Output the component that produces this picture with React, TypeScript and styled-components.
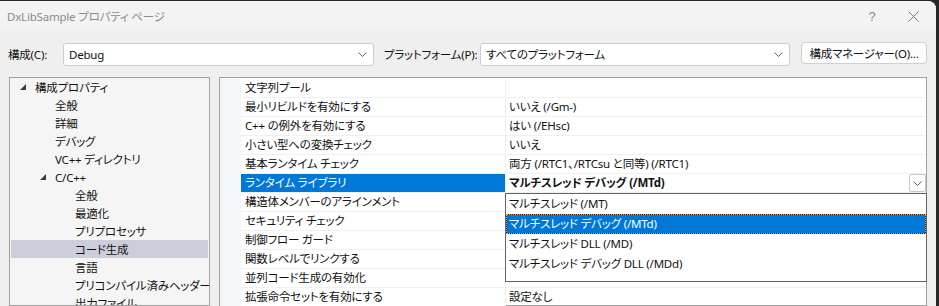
import React from 'react';
import styled, { createGlobalStyle } from 'styled-components';

const GlobalStyle = createGlobalStyle`
  html, body {
    margin: 0;
    padding: 0;
    background: #262626;
  }
  body {
    width: 939px;
    height: 306px;
    overflow: hidden;
    font-family: "Noto Sans", "Noto Sans CJK JP", sans-serif;
    font-size: 11.5px;
    letter-spacing: -0.2px;
    font-feature-settings: "palt";
    color: #111;
  }
  * {
    box-sizing: border-box;
  }
`;

const Window = styled.div`
  margin-top: 1px;
  width: 936px;
  height: 305px;
  background: #efefef;
  border-top-right-radius: 8px;
  overflow: hidden;
  display: flex;
  flex-direction: column;
`;

const TitleBar = styled.div`
  height: 30px;
  flex: none;
  display: flex;
  align-items: center;
  padding-left: 7px;
  background: #f3f3f3;
`;

const Title = styled.div`
  flex: 1;
  color: #8b8b8b;
`;

const CaptionButton = styled.div<{ $w: number; $mr: number }>`
  width: ${p => p.$w}px;
  margin-right: ${p => p.$mr}px;
  height: 30px;
  display: flex;
  align-items: center;
  justify-content: center;
  color: #8b8b8b;
  font-family: "Liberation Sans", sans-serif;
  font-size: 13px;
`;

const ConfigBar = styled.div`
  height: 46px;
  flex: none;
  display: flex;
  align-items: flex-start;
  padding: 12px 0 0 8px;
`;

const Label = styled.div<{ $w: number }>`
  width: ${p => p.$w}px;
  height: 23px;
  line-height: 23px;
  white-space: nowrap;
`;

const Combo = styled.div<{ $w: number; $gap: number }>`
  width: ${p => p.$w}px;
  margin-right: ${p => p.$gap}px;
  height: 23px;
  background: #fff;
  border: 1px solid #cdcdcd;
  border-radius: 3px;
  display: flex;
  align-items: center;
  padding: 0 6px 0 5px;
  line-height: 21px;
`;

const ComboText = styled.div`
  flex: 1;
  white-space: nowrap;
`;

const Button = styled.div`
  width: 126px;
  height: 22px;
  margin-top: -1px;
  background: #fdfdfd;
  border: 1px solid #d0d0d0;
  border-radius: 4px;
  display: flex;
  align-items: center;
  justify-content: center;
  white-space: nowrap;
`;

const Main = styled.div`
  flex: 1;
  min-height: 0;
  display: flex;
  gap: 9px;
  padding: 0 9px;
`;

const Tree = styled.div`
  width: 201px;
  flex: none;
  background: #f5f5f5;
  border: 1px solid #a0a0a0;
  padding: 0 1px;
  overflow: hidden;
`;

const TreeItem = styled.div<{ $depth: number; $selected?: boolean }>`
  height: 18px;
  display: flex;
  align-items: center;
  padding-left: ${p => 9 + p.$depth * 20}px;
  background: ${p => (p.$selected ? '#cccedb' : 'transparent')};
  white-space: nowrap;
`;

const Expander = styled.div`
  width: 15px;
  height: 18px;
  flex: none;
  display: flex;
  align-items: center;
`;

const Grid = styled.div`
  flex: 1;
  background: #fff;
  border: 1px solid #a0a0a0;
  padding-top: 1px;
`;

const Row = styled.div`
  display: grid;
  grid-template-columns: 21px 264px 1fr;
  height: 19px;
`;

const Gutter = styled.div`
  background: #f4f6fa;
`;

const NameCell = styled.div<{ $selected?: boolean }>`
  padding-left: 4px;
  line-height: 18px;
  border-bottom: 1px solid #f0f0f4;
  background: ${p => (p.$selected ? '#0078d7' : '#fff')};
  color: ${p => (p.$selected ? '#fff' : 'inherit')};
  white-space: nowrap;
`;

const ValueCell = styled.div<{ $bold?: boolean }>`
  position: relative;
  padding-left: 3px;
  line-height: 18px;
  border-left: 1px solid #f0f0f4;
  border-bottom: 1px solid #f0f0f4;
  font-weight: ${p => (p.$bold ? 700 : 400)};
  white-space: nowrap;
`;

const DropButton = styled.div`
  position: absolute;
  top: 0;
  right: 0;
  width: 17px;
  height: 18px;
  background: #fff;
  border: 1px solid #c8c8c8;
  border-radius: 2px;
  display: flex;
  align-items: center;
  justify-content: center;
`;

const DropList = styled.div`
  position: absolute;
  top: 19px;
  left: -1px;
  right: -1px;
  height: 89px;
  background: #fff;
  border: 1px solid #646464;
  z-index: 2;
  font-weight: 400;
`;

const DropItem = styled.div<{ $selected?: boolean }>`
  height: 20px;
  line-height: 20px;
  padding-left: 3px;
  background: ${p => (p.$selected ? '#0078d7' : '#fff')};
  color: ${p => (p.$selected ? '#fff' : 'inherit')};
  ${p =>
    p.$selected &&
    `
    border: 1px solid #1a1a1a;
    outline: 1px dotted #f5a623;
    outline-offset: -1px;
    line-height: 18px;
    padding-left: 2px;
  `}
`;

const Chevron = () => (
  <svg width="9" height="5" viewBox="0 0 9 5">
    <polyline points="0.5,0.5 4.5,4.5 8.5,0.5" fill="none" stroke="#606060" strokeWidth="1" />
  </svg>
);

const Triangle = () => (
  <svg width="6" height="6" viewBox="0 0 6 6">
    <path d="M6 0 L6 6 L0 6 Z" fill="#3c3c3c" />
  </svg>
);

const CloseIcon = () => (
  <svg width="11" height="11" viewBox="0 0 11 11">
    <path d="M0.5 0.5 L10.5 10.5 M10.5 0.5 L0.5 10.5" stroke="#7a7a7a" strokeWidth="1" />
  </svg>
);

type TreeNode = { label: string; depth: number; expanded?: boolean; selected?: boolean };

const treeNodes: TreeNode[] = [
  { label: '構成プロパティ', depth: 0, expanded: true },
  { label: '全般', depth: 1 },
  { label: '詳細', depth: 1 },
  { label: 'デバッグ', depth: 1 },
  { label: 'VC++ ディレクトリ', depth: 1 },
  { label: 'C/C++', depth: 1, expanded: true },
  { label: '全般', depth: 2 },
  { label: '最適化', depth: 2 },
  { label: 'プリプロセッサ', depth: 2 },
  { label: 'コード生成', depth: 2, selected: true },
  { label: '言語', depth: 2 },
  { label: 'プリコンパイル済みヘッダー', depth: 2 },
  { label: '出力ファイル', depth: 2 },
];

type Prop = { name: string; value: string; selected?: boolean };

const properties: Prop[] = [
  { name: '文字列プール', value: '' },
  { name: '最小リビルドを有効にする', value: 'いいえ (/Gm-)' },
  { name: 'C++ の例外を有効にする', value: 'はい (/EHsc)' },
  { name: '小さい型への変換チェック', value: 'いいえ' },
  { name: '基本ランタイム チェック', value: '両方 (/RTC1、/RTCsu と同等) (/RTC1)' },
  { name: 'ランタイム ライブラリ', value: 'マルチスレッド デバッグ (/MTd)', selected: true },
  { name: '構造体メンバーのアラインメント', value: '' },
  { name: 'セキュリティ チェック', value: '' },
  { name: '制御フロー ガード', value: '' },
  { name: '関数レベルでリンクする', value: '' },
  { name: '並列コード生成の有効化', value: '' },
  { name: '拡張命令セットを有効にする', value: '設定なし' },
];

const runtimeOptions = [
  'マルチスレッド (/MT)',
  'マルチスレッド デバッグ (/MTd)',
  'マルチスレッド DLL (/MD)',
  'マルチスレッド デバッグ DLL (/MDd)',
];

const App: React.FC = () => {
  return (
    <>
      <GlobalStyle />
      <Window>
        <TitleBar>
          <Title>DxLibSample プロパティ ページ</Title>
          <CaptionButton $w={20} $mr={8}>?</CaptionButton>
          <CaptionButton $w={46} $mr={0}>
            <CloseIcon />
          </CaptionButton>
        </TitleBar>

        <ConfigBar>
          <Label $w={55}>構成(C):</Label>
          <Combo $w={311} $gap={10}>
            <ComboText>Debug</ComboText>
            <Chevron />
          </Combo>
          <Label $w={96}>プラットフォーム(P):</Label>
          <Combo $w={310} $gap={11}>
            <ComboText>すべてのプラットフォーム</ComboText>
            <Chevron />
          </Combo>
          <Button>構成マネージャー(O)...</Button>
        </ConfigBar>

        <Main>
          <Tree>
            {treeNodes.map((n, i) => (
              <TreeItem key={i} $depth={n.depth} $selected={n.selected}>
                {n.expanded ? (
                  <Expander>
                    <Triangle />
                  </Expander>
                ) : (
                  <Expander />
                )}
                {n.label}
              </TreeItem>
            ))}
          </Tree>

          <Grid>
            {properties.map((p, i) => (
              <Row key={i}>
                <Gutter />
                <NameCell $selected={p.selected}>{p.name}</NameCell>
                <ValueCell $bold={p.selected}>
                  {p.value}
                  {p.selected && (
                    <>
                      <DropButton>
                        <Chevron />
                      </DropButton>
                      <DropList>
                        {runtimeOptions.map((o, j) => (
                          <DropItem key={j} $selected={j === 1}>
                            {o}
                          </DropItem>
                        ))}
                      </DropList>
                    </>
                  )}
                </ValueCell>
              </Row>
            ))}
          </Grid>
        </Main>
      </Window>
    </>
  );
};

export default App;
